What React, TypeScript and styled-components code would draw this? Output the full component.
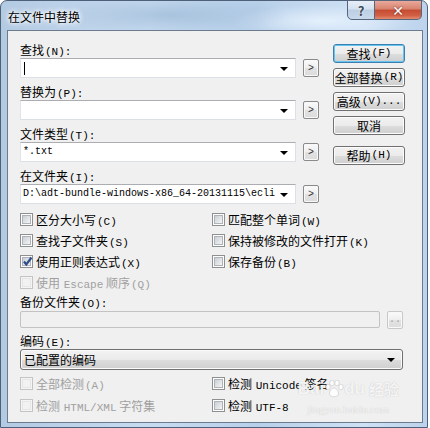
import React from "react";
import styled, { createGlobalStyle, css } from "styled-components";

const Global = createGlobalStyle`
  html, body { margin: 0; padding: 0; background: #ffffff; }
  body { width: 430px; height: 428px; overflow: hidden; }
`;

const UI = `"Noto Sans CJK SC", "DejaVu Sans", sans-serif`;
const MONO = `"Liberation Mono", "DejaVu Sans Mono", monospace`;

const Window = styled.div`
  position: relative;
  width: 428px;
  height: 428px;
  box-sizing: border-box;
  border: 1px solid #4f6178;
  border-radius: 7px 7px 0 0;
  background:
    radial-gradient(ellipse 120px 20px at 170px 14px, rgba(150,180,210,0.6), transparent),
    radial-gradient(ellipse 90px 16px at 320px 20px, rgba(235,245,255,0.8), transparent),
    linear-gradient(90deg, #b3cae3 0%, #c8dcf1 35%, #b8d0ea 60%, #cfe1f4 85%, #bcd3ec 100%);
  display: flex;
  flex-direction: column;
  font-family: ${UI};
  font-size: 12px;
  color: #000;
`;

const TitleBar = styled.div`
  position: relative;
  height: 29px;
  display: flex;
  align-items: center;
  padding-left: 7px;
`;

const TitleText = styled.div`
  font-size: 12px;
  line-height: 14px;
  margin-top: 2px;
  color: #000;
  text-shadow: 0 0 6px #fff, 0 0 6px #fff, 0 0 3px #fff;
`;

const CaptionButtons = styled.div`
  position: absolute;
  top: -1px;
  right: 5px;
  display: flex;
`;

const CaptionBtn = styled.div<{ $close?: boolean }>`
  height: 20px;
  box-sizing: border-box;
  border: 1px solid #56677d;
  display: flex;
  align-items: center;
  justify-content: center;
  font-family: ${UI};
  font-weight: bold;
  ${(p) =>
    p.$close
      ? css`
          width: 47px;
          border-radius: 0 0 5px 0;
          border-left: none;
          background: linear-gradient(180deg, #e9a99a 0%, #d8826e 45%, #c44c31 50%, #d25f44 80%, #e38a6e 100%);
          color: #fff;
          font-size: 14px;
          text-shadow: 0 0 2px #622;
        `
      : css`
          width: 28px;
          border-radius: 0 0 0 5px;
          background: linear-gradient(180deg, #e7eef8 0%, #d5e1ef 45%, #bccee3 50%, #c9d9ec 100%);
          color: #3e4a59;
          font-size: 13px;
          text-shadow: 0 0 2px #fff;
        `}
`;

const Client = styled.div`
  flex: 1;
  margin: 0 4px 4px 6px;
  border: 1px solid #6c7b8e;
  background: #f0f0f0;
  padding: 11px 17px 0 12px;
  display: flex;
  flex-direction: column;
`;

const Top = styled.div`
  display: flex;
  justify-content: space-between;
`;

const Fields = styled.div`
  width: 299px;
  display: flex;
  flex-direction: column;
`;

const Label = styled.div`
  height: 16px;
  line-height: 16px;
  white-space: nowrap;
`;

const M = styled.span`
  font-family: ${MONO};
  font-size: 11px;
  margin-left: 1px;
`;

const FieldRow = styled.div<{ $gap?: number }>`
  display: flex;
  align-items: center;
  height: 20px;
  margin-bottom: ${(p) => p.$gap ?? 6}px;
`;

const Combo = styled.div`
  position: relative;
  width: 276px;
  height: 20px;
  box-sizing: border-box;
  border: 1px solid #dbdfe6;
  border-top-color: #abadb3;
  border-left-color: #e2e3ea;
  background: #fff;
  display: flex;
  align-items: center;
  padding-left: 2px;
  overflow: hidden;
`;

const ComboText = styled.span`
  white-space: nowrap;
  font-family: ${MONO};
  font-size: 10px;
  line-height: 18px;
`;

const Caret = styled.span`
  display: inline-block;
  width: 1px;
  height: 13px;
  background: #000;
  margin-left: 1px;
`;

const DropArrow = styled.span`
  position: absolute;
  right: 7px;
  top: 8px;
  width: 0;
  height: 0;
  border-left: 4px solid transparent;
  border-right: 4px solid transparent;
  border-top: 4px solid #000;
`;

const SmallBtn = styled.div<{ $disabled?: boolean }>`
  width: 16px;
  height: 18px;
  margin-left: 7px;
  box-sizing: border-box;
  border: 1px solid ${(p) => (p.$disabled ? "#c8c8c8" : "#8a8a8a")};
  border-radius: 2px;
  background: linear-gradient(180deg, #fbfbfb 0%, #eeeeee 50%, #e2e2e2 51%, #dcdcdc 100%);
  display: flex;
  align-items: center;
  justify-content: center;
  font-family: ${MONO};
  font-size: 10px;
  color: ${(p) => (p.$disabled ? "#a0a0a0" : "#333")};
  box-shadow: inset 0 0 0 1px #f8f8f8;
`;

const Buttons = styled.div`
  width: 72px;
  margin-top: 2px;
  display: flex;
  flex-direction: column;
  gap: 5px;
`;

const Button = styled.div<{ $default?: boolean; $spaced?: boolean }>`
  height: 19px;
  box-sizing: border-box;
  border: 1px solid ${(p) => (p.$default ? "#3c7fb1" : "#707070")};
  border-radius: 3px;
  background: linear-gradient(180deg, #f2f2f2 0%, #ebebeb 50%, #dddddd 51%, #cfcfcf 100%);
  box-shadow: inset 0 0 0 1px ${(p) => (p.$default ? "#63c5f0" : "#fcfcfc")};
  display: flex;
  align-items: center;
  justify-content: center;
  line-height: 17px;
  white-space: nowrap;
  margin-top: ${(p) => (p.$spaced ? 6 : 0)}px;
`;

const Checks = styled.div<{ $row: number }>`
  display: grid;
  grid-template-columns: 192px 1fr;
  grid-auto-rows: ${(p) => p.$row}px;
`;

const Check = styled.div<{ $disabled?: boolean }>`
  display: flex;
  align-items: center;
  white-space: nowrap;
  color: ${(p) => (p.$disabled ? "#a0a0a0" : "#000")};
`;

const Box = styled.span<{ $disabled?: boolean }>`
  position: relative;
  width: 13px;
  height: 13px;
  box-sizing: border-box;
  border: 1px solid ${(p) => (p.$disabled ? "#c4c4c4" : "#8e8f8f")};
  background: ${(p) => (p.$disabled ? "#f4f4f4" : "#fdfdfd")};
  margin-right: 3px;
  flex: none;
  &::after {
    content: "";
    position: absolute;
    inset: 1px;
    border: 1px solid ${(p) => (p.$disabled ? "#e6e6e6" : "#aeb3b9")};
    background: ${(p) =>
      p.$disabled ? "#f2f2f2" : "linear-gradient(135deg, #cbcfd5 0%, #f4f4f4 100%)"};
  }
`;

const Tick = styled.svg`
  position: absolute;
  left: 1px;
  top: 0px;
  z-index: 1;
`;

const Section = styled.div<{ $top?: number }>`
  margin-top: ${(p) => p.$top ?? 0}px;
`;

const BackupRow = styled.div`
  display: flex;
  align-items: center;
  height: 17px;
  margin-top: 1px;
`;

const DisabledField = styled.div`
  width: 360px;
  height: 17px;
  box-sizing: border-box;
  border: 1px solid #c3c3c3;
  border-radius: 2px;
  background: #f0f0f0;
`;

const Select = styled.div`
  position: relative;
  width: 383px;
  height: 21px;
  box-sizing: border-box;
  border: 1px solid #707070;
  border-radius: 3px;
  background: linear-gradient(180deg, #f2f2f2 0%, #ebebeb 50%, #dddddd 51%, #cfcfcf 100%);
  box-shadow: inset 0 0 0 1px #fbfbfb;
  display: flex;
  align-items: center;
  padding-left: 3px;
  line-height: 18px;
`;

const Watermark = styled.div`
  position: absolute;
  right: 28px;
  bottom: 12px;
  display: flex;
  flex-direction: column;
  align-items: center;
  color: rgba(255, 255, 255, 0.85);
  text-shadow: 0 0 1px rgba(150, 150, 150, 0.6);
  pointer-events: none;
`;

const WmTop = styled.div`
  display: flex;
  align-items: center;
  font-family: "Liberation Sans", sans-serif;
  font-weight: bold;
  font-size: 17px;
  line-height: 20px;
`;

const WmCn = styled.span`
  font-family: ${UI};
  font-size: 15px;
  margin-left: 4px;
`;

const WmUrl = styled.div`
  font-family: "Liberation Serif", serif;
  font-size: 11px;
  line-height: 12px;
  margin-top: 4px;
`;

type CheckProps = { label: React.ReactNode; checked?: boolean; disabled?: boolean };
const CheckItem = ({ label, checked, disabled }: CheckProps) => (
  <Check $disabled={disabled}>
    <Box $disabled={disabled}>
      {checked && (
        <Tick width="11" height="11" viewBox="0 0 11 11">
          <path d="M2 5.5 L4.3 8.5 L9.5 1.5" fill="none" stroke="#2e4e8c" strokeWidth="2.2" />
        </Tick>
      )}
    </Box>
    <span>{label}</span>
  </Check>
);

export default function App() {
  return (
    <>
      <Global />
      <Window>
        <TitleBar>
          <TitleText>在文件中替换</TitleText>
          <CaptionButtons>
            <CaptionBtn>?</CaptionBtn>
            <CaptionBtn $close>✕</CaptionBtn>
          </CaptionButtons>
        </TitleBar>
        <Client>
          <Top>
            <Fields>
              <Label>查找<M>(N):</M></Label>
              <FieldRow>
                <Combo>
                  <Caret />
                  <DropArrow />
                </Combo>
                <SmallBtn>&gt;</SmallBtn>
              </FieldRow>
              <Label>替换为<M>(P):</M></Label>
              <FieldRow>
                <Combo>
                  <DropArrow />
                </Combo>
                <SmallBtn>&gt;</SmallBtn>
              </FieldRow>
              <Label>文件类型<M>(T):</M></Label>
              <FieldRow>
                <Combo>
                  <ComboText>*.txt</ComboText>
                  <DropArrow />
                </Combo>
                <SmallBtn>&gt;</SmallBtn>
              </FieldRow>
              <Label>在文件夹<M>(I):</M></Label>
              <FieldRow $gap={5}>
                <Combo>
                  <ComboText>D:\adt-bundle-windows-x86_64-20131115\ecli</ComboText>
                  <DropArrow />
                </Combo>
                <SmallBtn>&gt;</SmallBtn>
              </FieldRow>
            </Fields>
            <Buttons>
              <Button $default>查找<M>(F)</M></Button>
              <Button>全部替换<M>(R)</M></Button>
              <Button>高级<M>(V)...</M></Button>
              <Button>取消</Button>
              <Button $spaced>帮助<M>(H)</M></Button>
            </Buttons>
          </Top>
          <Checks $row={21}>
            <CheckItem label={<>区分大小写<M>(C)</M></>} />
            <CheckItem label={<>匹配整个单词<M>(W)</M></>} />
            <CheckItem label={<>查找子文件夹<M>(S)</M></>} />
            <CheckItem label={<>保持被修改的文件打开<M>(K)</M></>} />
            <CheckItem checked label={<>使用正则表达式<M>(X)</M></>} />
            <CheckItem label={<>保存备份<M>(B)</M></>} />
            <CheckItem disabled label={<>使用 <M>Escape</M> 顺序<M>(Q)</M></>} />
          </Checks>
          <Section $top={1}>
            <Label>备份文件夹<M>(O):</M></Label>
            <BackupRow>
              <DisabledField />
              <SmallBtn $disabled>..</SmallBtn>
            </BackupRow>
          </Section>
          <Section $top={5}>
            <Label>编码<M>(E):</M></Label>
            <Select>
              已配置的编码
              <DropArrow />
            </Select>
          </Section>
          <Section $top={2}>
            <Checks $row={22}>
              <CheckItem disabled label={<>全部检测<M>(A)</M></>} />
              <CheckItem label={<>检测 <M>Unicode</M> 签名</>} />
              <CheckItem disabled label={<>检测 <M>HTML/XML</M> 字符集</>} />
              <CheckItem label={<>检测 <M>UTF-8</M></>} />
            </Checks>
          </Section>
        </Client>
        <Watermark>
          <WmTop>
            Bai
            <svg width="20" height="18" viewBox="0 0 20 18">
              <g fill="rgba(255,255,255,0.85)" stroke="rgba(150,150,150,0.5)" strokeWidth="0.6">
                <ellipse cx="4" cy="7" rx="2.2" ry="2.8" />
                <ellipse cx="8" cy="3" rx="2.2" ry="2.8" />
                <ellipse cx="13" cy="3" rx="2.2" ry="2.8" />
                <ellipse cx="17" cy="7" rx="2.2" ry="2.8" />
                <path d="M10 8 C6 8 4 15 7 16 C9 17 11 17 13 16 C16 15 14 8 10 8 Z" />
              </g>
            </svg>
            du<WmCn>经验</WmCn>
          </WmTop>
          <WmUrl>jingyan.baidu.com</WmUrl>
        </Watermark>
      </Window>
    </>
  );
}
